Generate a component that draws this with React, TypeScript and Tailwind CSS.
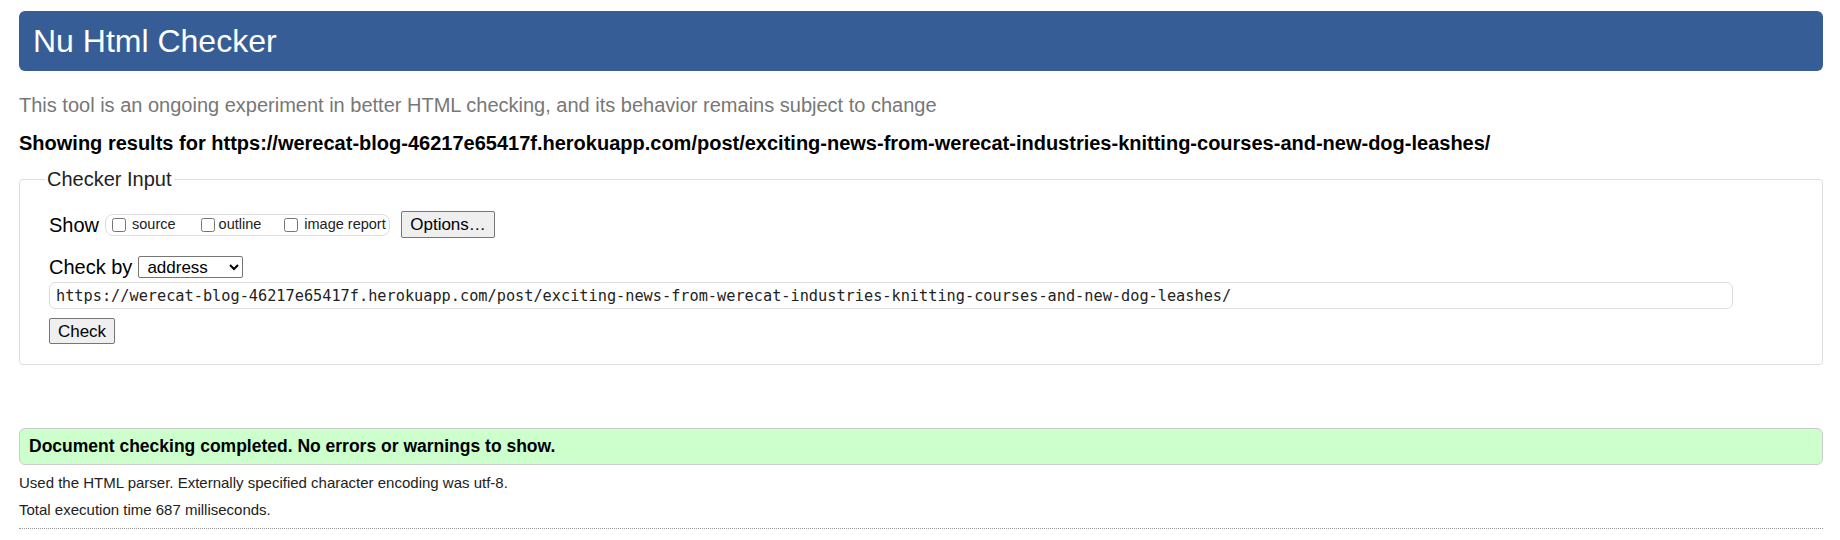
import React from "react";

const URL =
  "https://werecat-blog-46217e65417f.herokuapp.com/post/exciting-news-from-werecat-industries-knitting-courses-and-new-dog-leashes/";

export default function App() {
  return (
    <div
      className="w-[1840px] h-[540px] bg-white overflow-hidden px-[19px] pt-[11px] text-black"
      style={{ fontFamily: '"Liberation Sans", Arial, sans-serif' }}
    >
      <div className="h-[60px] w-[1804px] rounded-[6px] bg-[#365d95] flex items-center pl-[14px]">
        <h1 className="text-[32px] leading-none text-white font-normal">Nu Html Checker</h1>
      </div>

      <p className="mt-[23px] text-[20px] leading-[22px] text-[#777]">
        This tool is an ongoing experiment in better HTML checking, and its behavior remains subject to change
      </p>
      <p className="mt-[16px] text-[20px] leading-[22px] font-bold">Showing results for {URL}</p>

      <fieldset className="mt-[14px] w-[1804px] h-[197px] border border-[#ddd] rounded-[4px] pl-[29px] pr-[10px] box-border">
        <legend className="-ml-[4px] px-[2px] text-[20px] leading-[23px] text-[#222]">Checker Input</legend>
        <div className="mt-[20px] flex items-center h-[27px]">
          <span className="text-[20px] leading-none mr-[6px]">Show</span>
          <div className="h-[22px] w-[285px] border border-[#ddd] rounded-[8px] flex items-center pl-[6px] text-[14.5px] text-[#222]">
            <label className="flex items-center">
              <input type="checkbox" className="w-[14px] h-[14px] m-0" />
              <span className="ml-[6px]">source</span>
            </label>
            <label className="flex items-center ml-[25px]">
              <input type="checkbox" className="w-[14px] h-[14px] m-0" />
              <span className="ml-[4px]">outline</span>
            </label>
            <label className="flex items-center ml-[23px]">
              <input type="checkbox" className="w-[14px] h-[14px] m-0" />
              <span className="ml-[6px]">image report</span>
            </label>
          </div>
          <button className="ml-[11px] h-[27px] w-[94px] bg-[#efefef] border border-[#767676] rounded-[2px] text-[17px] text-black leading-none">
            Options…
          </button>
        </div>
        <div className="mt-[18px] flex items-center h-[22px]">
          <span className="text-[20px] leading-none mr-[6px]">Check by</span>
          <select
            defaultValue="address"
            className="h-[22px] w-[105px] border border-[#767676] rounded-[2px] bg-white text-[17px] leading-none pl-[4px]"
          >
            <option value="address">address</option>
            <option value="file">file upload</option>
            <option value="text">text input</option>
          </select>
        </div>
        <div className="mt-[4px]">
          <input
            readOnly
            value={URL}
            className="w-[1684px] h-[27px] border border-[#ddd] rounded-[6px] px-[6px] text-[15.25px] text-[#222] outline-none"
            style={{ fontFamily: '"DejaVu Sans Mono", "Liberation Mono", monospace' }}
          />
        </div>
        <div className="mt-[9px]">
          <button className="h-[26px] w-[66px] bg-[#efefef] border border-[#767676] rounded-[2px] text-[17px] text-black leading-none">
            Check
          </button>
        </div>
      </fieldset>

      <div className="mt-[63px] w-[1804px] h-[37px] bg-[#ccffcc] border border-[#ccc] rounded-[6px] flex items-center pl-[9px]">
        <span className="text-[17.5px] font-bold leading-none">Document checking completed. No errors or warnings to show.</span>
      </div>
      <p className="mt-[9px] text-[15px] leading-[18px] text-[#222]">
        Used the HTML parser. Externally specified character encoding was utf-8.
      </p>
      <p className="mt-[9px] text-[15px] leading-[18px] text-[#222]">Total execution time 687 milliseconds.</p>
      <div className="mt-[9px] w-[1804px] border-t border-dotted border-[#999]" />
    </div>
  );
}
